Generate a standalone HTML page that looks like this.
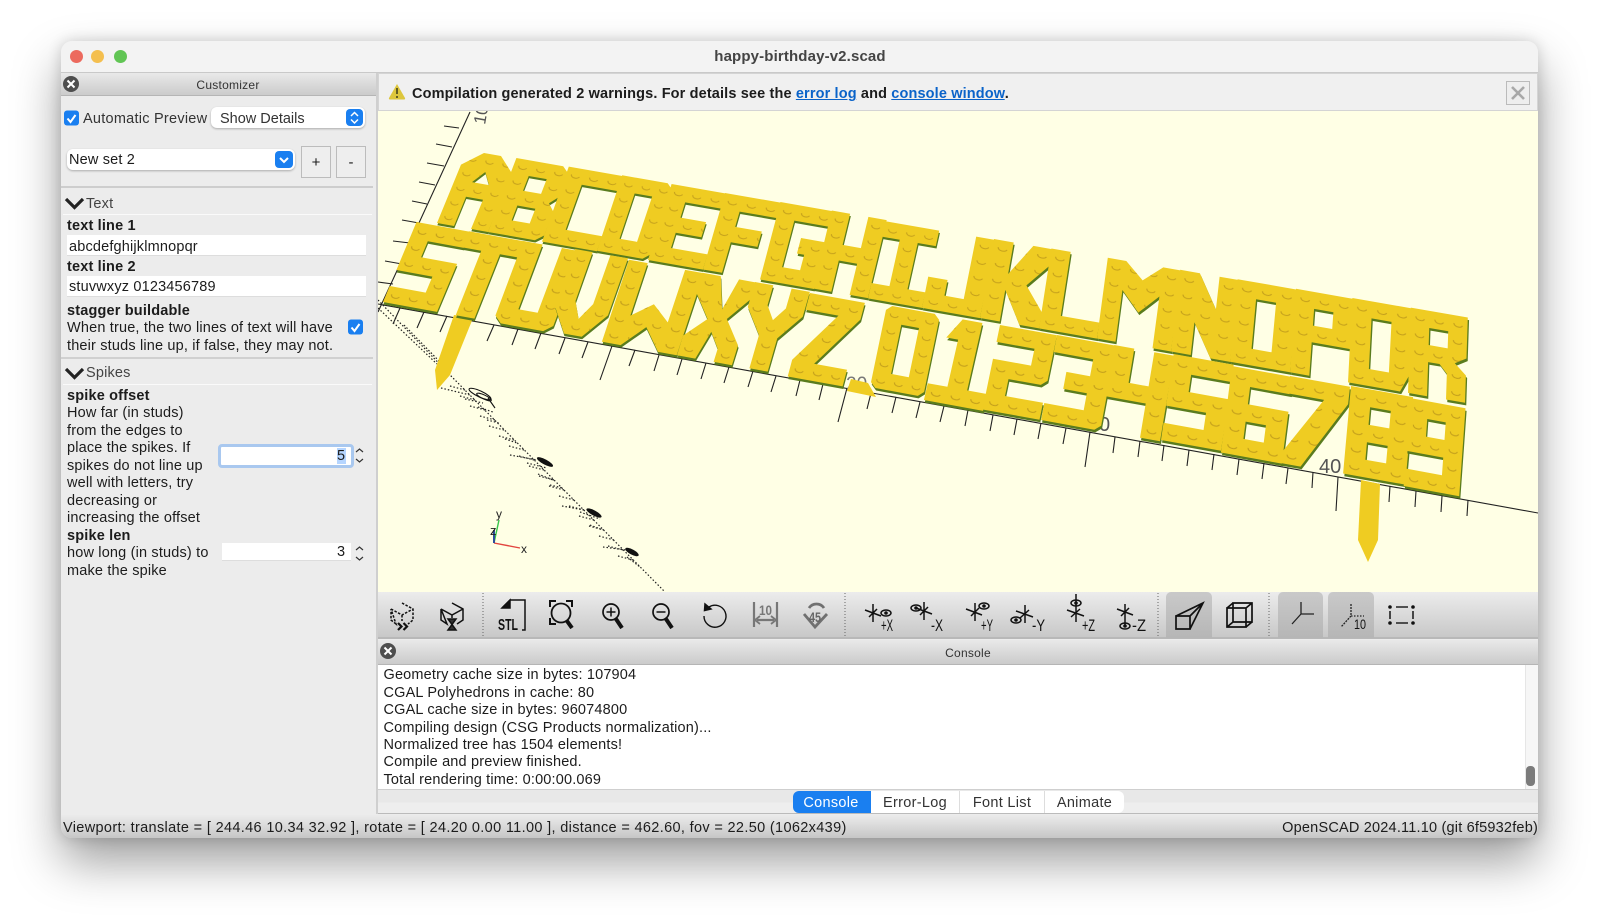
<!DOCTYPE html>
<html><head><meta charset="utf-8"><title>happy-birthday-v2.scad</title>
<style>
html,body{margin:0;padding:0;background:#fff;width:1600px;height:919px;overflow:hidden;font-family:"Liberation Sans",sans-serif;color:#1c1c1c}
.a{position:absolute}
.t{position:absolute;white-space:nowrap;line-height:18px;font-size:14.5px;letter-spacing:.17px;margin-top:1px}
.b{font-weight:bold}
.in{position:absolute;background:#fff;border-bottom:1px solid #ddd;box-sizing:border-box}
.hd{position:absolute;background:linear-gradient(#e9e9e9,#cbcbcb);border-bottom:1px solid #b5b5b5;box-sizing:border-box}
.sel{position:absolute;background:#fff;border-radius:6px;box-shadow:0 1px 2px rgba(0,0,0,.28)}
.btn{position:absolute;background:#eee;border:1px solid #bcbcbc;box-sizing:border-box;text-align:center;font-size:15px;line-height:32px}
.tab{position:absolute;top:791px;height:22px;line-height:24px;text-align:center;font-size:14.5px;letter-spacing:.3px;background:#fff;box-sizing:border-box;border-right:1px solid #ddd}
a{color:#0a63c9;text-decoration:underline}
svg{position:absolute;left:0;top:0}
.e{fill:#5a7c1e;transform:translate(.07px,.14px)}
.y{fill:#efcc22}
.p{fill:url(#st)}
</style></head>
<body>
<div class="a" id="win" style="left:61px;top:41px;width:1477px;height:797px;border-radius:11px;background:#ececec;box-shadow:0 24px 48px rgba(0,0,0,.38),0 0 14px rgba(0,0,0,.16)"></div>
<div class="a" style="left:61px;top:41px;width:1477px;height:32px;background:#f3f3f3;border-radius:11px 11px 0 0;border-bottom:1px solid #c9c9c9;box-sizing:border-box"></div>
<div class="a" style="left:70px;top:50px;width:13px;height:13px;border-radius:50%;background:#ec6a5e"></div>
<div class="a" style="left:91px;top:50px;width:13px;height:13px;border-radius:50%;background:#f4bf4f"></div>
<div class="a" style="left:114px;top:50px;width:13px;height:13px;border-radius:50%;background:#61c554"></div>
<div class="t b" style="left:600px;width:400px;text-align:center;top:47px;color:#444;font-size:15px;letter-spacing:.14px">happy-birthday-v2.scad</div>

<!-- customizer -->
<div class="hd" style="left:61px;top:73px;width:315px;height:23px"></div>
<div class="t" style="left:61px;width:334px;text-align:center;top:75px;font-size:12px;color:#333;letter-spacing:.25px">Customizer</div>
<div class="a" style="left:376px;top:73px;width:2px;height:741px;background:#cfcfcf"></div>
<div class="t" style="left:83px;top:109px;letter-spacing:.25px;color:#333">Automatic Preview</div>
<div class="sel" style="left:211px;top:107px;width:154px;height:21px"></div>
<div class="t" style="left:220px;top:109px;color:#333;letter-spacing:0">Show Details</div>
<div class="sel" style="left:67px;top:149px;width:228px;height:21px"></div>
<div class="t" style="left:69px;top:150px">New set 2</div>
<div class="btn" style="left:301px;top:146px;width:30px;height:32px">+</div>
<div class="btn" style="left:336px;top:146px;width:30px;height:32px">-</div>
<div class="a" style="left:61px;top:186px;width:312px;height:2px;background:#cdcdcd"></div>
<div class="a" style="left:63px;top:214px;width:309px;height:1px;background:#fafafa"></div>
<div class="t" style="left:86px;top:194px;color:#444">Text</div>
<div class="t b" style="left:67px;top:216px">text line 1</div>
<div class="in" style="left:67px;top:235px;width:299px;height:21px"></div>
<div class="t" style="left:69px;top:237px">abcdefghijklmnopqr</div>
<div class="t b" style="left:67px;top:257px">text line 2</div>
<div class="in" style="left:67px;top:276px;width:299px;height:21px"></div>
<div class="t" style="left:69px;top:277px">stuvwxyz 0123456789</div>
<div class="t b" style="left:67px;top:301px">stagger buildable</div>
<div class="t" style="left:67px;top:318px">When true, the two lines of text will have</div>
<div class="t" style="left:67px;top:336px">their studs line up, if false, they may not.</div>
<div class="a" style="left:61px;top:357px;width:312px;height:2px;background:#d0d0d0"></div>
<div class="a" style="left:63px;top:384px;width:309px;height:1px;background:#fafafa"></div>
<div class="t" style="left:86px;top:363px;color:#444">Spikes</div>
<div class="t b" style="left:67px;top:386px">spike offset</div>
<div class="t" style="left:67px;top:403px">How far (in studs)</div>
<div class="t" style="left:67px;top:421px">from the edges to</div>
<div class="t" style="left:67px;top:438px">place the spikes. If</div>
<div class="t" style="left:67px;top:456px">spikes do not line up</div>
<div class="t" style="left:67px;top:473px">well with letters, try</div>
<div class="t" style="left:67px;top:491px">decreasing or</div>
<div class="t" style="left:67px;top:508px">increasing the offset</div>
<div class="t b" style="left:67px;top:526px">spike len</div>
<div class="t" style="left:67px;top:543px">how long (in studs) to</div>
<div class="t" style="left:67px;top:561px">make the spike</div>
<div class="a" style="left:218px;top:444px;width:136px;height:24px;background:#fff;border:3px solid #a9c8ef;border-radius:4px;box-sizing:border-box"></div>
<div class="a" style="left:337px;top:448px;width:9px;height:16px;background:#b5d5ff"></div>
<div class="t" style="left:337px;top:446px">5</div>
<div class="in" style="left:222px;top:543px;width:129px;height:18px"></div>
<div class="t" style="left:337px;top:542px">3</div>

<!-- viewport -->
<div class="a" style="left:378px;top:73px;width:1160px;height:38px;background:#f0f0f0;border:1px solid #d4d4d4;box-sizing:border-box"></div>
<div class="t b" style="left:412px;top:84px;letter-spacing:.14px">Compilation generated 2 warnings. For details see the <a>error log</a> and <a>console window</a>.</div>
<div class="a" style="left:1506px;top:81px;width:24px;height:24px;border:1px solid #bbb;background:#eee;box-sizing:border-box"></div>
<div class="a" style="left:378px;top:111px;width:1160px;height:481px;background:#ffffe5"></div>

<svg width="1600" height="919" viewBox="0 0 1600 919" xmlns="http://www.w3.org/2000/svg">
<defs>
<clipPath id="vp"><rect x="378" y="111" width="1160" height="481"/></clipPath>
<pattern id="st" patternUnits="userSpaceOnUse" width="1" height="1">
<path d="M.28 .46C.3 .68 .64 .72 .74 .54" fill="none" stroke="#c4a01c" stroke-width=".06"/>
</pattern>
</defs>
<g clip-path="url(#vp)">
<!-- axes -->
<g fill="none" stroke="#222" stroke-width="1.1">
<path d="M378 304L1538 513"/>
<path d="M378 312L470 112"/>
<path d="M444 126L459 128M436 144L452 147M427 163L444 166M419 182L435 185M412 201L427 204M402 220L419 223M393 241L410 243M385 261L402 264M378 282L393 284"/>
<path d="M400 308l-7 16M424 312l-7 16M447 316l-7 16M471 321l-7 16M494 325l-7 16M518 329l-6 16M541 333l-6 16M565 338l-6 16M588 342l-6 16M612 346l-12 34M635 350l-6 16M659 355l-5 16M682 359l-5 16M706 363l-5 16M729 367l-5 16M753 371l-5 16M776 376l-5 16M800 380l-4 16M823 384l-4 16M847 388l-9 34M871 393l-4 16M896 397l-4 16M920 402l-4 16M944 406l-4 16M968 410l-3 16M993 415l-3 16M1017 419l-3 16M1041 423l-3 16M1066 428l-3 16M1090 432l-5 35M1115 437l-2 16M1140 441l-2 16M1164 445l-2 16M1189 450l-2 16M1214 454l-2 16M1239 459l-2 16M1264 463l-2 16M1288 468l-2 16M1313 472l-1 16M1338 477l-2 34M1364 481l-1 16M1390 486l-1 16M1416 491l-1 16M1442 496l-1 16M1468 500l-1 16"/>
</g>
<g font-family="Liberation Sans" fill="#555" font-size="20">
<text transform="translate(485,125) rotate(-80)" font-size="17">10</text>
<text x="846" y="390" font-size="19" fill="#777">20</text>
<text x="1099" y="431">0</text>
<text x="1319" y="473">40</text>
</g>
<!-- dotted -->
<g fill="none" stroke="#222" stroke-width="1.2" stroke-dasharray="1.5 2">
<path d="M378 300L452 377L665 592M378 308L437 364M404 325L440 362"/>
<path d="M441 388L470 395M465 399l18 4M478 407l15 5M487 420l12 3M505 439l12 4M510 455l27 5M527 463l20 5M538 474l15 6M550 485l13 3M562 506l22 4M580 512l20 7M590 525l13 5M603 547l23 3M627 557l13 10"/>
<path d="M450 386l15 4M460 396l15 4M470 406l15 4M480 416l15 4M489 426l15 4M499 436l15 4M509 446l15 4M519 456l15 4M529 466l15 4M539 476l15 4M549 486l15 4M559 496l15 4M569 506l15 4M579 516l15 4M589 526l15 4M599 536l15 4M608 546l15 4M618 556l15 4"/>
</g>
<g stroke="#111" fill="none" stroke-width="1.1">
<ellipse cx="480" cy="394" rx="12" ry="3" transform="rotate(25 480 394)"/>
<ellipse cx="484" cy="397" rx="8" ry="2" transform="rotate(25 484 397)"/>
<path d="M488 398L495 408"/>
</g>
<g fill="#111">
<ellipse cx="545" cy="462" rx="9" ry="2.6" transform="rotate(28 545 462)"/>
<ellipse cx="594" cy="513" rx="8.5" ry="2.6" transform="rotate(28 594 513)"/>
<ellipse cx="632" cy="552" rx="7.5" ry="2.6" transform="rotate(28 632 552)"/>
</g>
<!-- gizmo -->
<path d="M494 543L520 548" stroke="#e2453f" stroke-width="1.4"/>
<path d="M494 543L499 520" stroke="#36c64a" stroke-width="1.4"/>
<path d="M494 543V530" stroke="#2c4d9c" stroke-width="2"/>
<g font-family="Liberation Sans" font-size="12" fill="#222"><text x="521" y="553">x</text><text x="496" y="518">y</text><text x="490" y="535" font-size="13">z</text></g>
<!-- spikes -->
<path d="M454 315L473 318L450 375L437 390L435 370Z" fill="#efcc22"/>
<path d="M1361 480L1380 484L1378 540L1368 562L1358 540Z" fill="#efcc22"/>
<path d="M847 391L851 379L868 383L876 397Z" fill="#efcc22"/>

<!-- TOP ROW -->
<g fill-rule="evenodd">
<g transform="matrix(17 2.98 -6 14.6 467 150)"><path class="e" d="M0 5V1L1 0H2L3 1V5H2V3H1V5ZM1 2L1.5 1.2L2 2Z"/><path class="y" d="M0 5V1L1 0H2L3 1V5H2V3H1V5ZM1 2L1.5 1.2L2 2Z"/><path class="p" d="M0 5V1L1 0H2L3 1V5H2V3H1V5ZM1 2L1.5 1.2L2 2Z"/></g>
<g transform="matrix(18 3.15 -5.68 14.8 516.4 158)"><path class="e" d="M0 0H2.6L3 .4V2L2.6 2.5L3 3V4.6L2.6 5H0ZM1 1V2H2V1ZM1 3V4H2V3Z"/><path class="y" d="M0 0H2.6L3 .4V2L2.6 2.5L3 3V4.6L2.6 5H0ZM1 1V2H2V1ZM1 3V4H2V3Z"/><path class="p" d="M0 0H2.6L3 .4V2L2.6 2.5L3 3V4.6L2.6 5H0ZM1 1V2H2V1ZM1 3V4H2V3Z"/></g>
<g transform="matrix(18.3 3.2 -5.36 15 568.8 166.6)"><path class="e" d="M0 0H3V1H1V4H3V5H0Z"/><path class="y" d="M0 0H3V1H1V4H3V5H0Z"/><path class="p" d="M0 0H3V1H1V4H3V5H0Z"/></g>
<g transform="matrix(17.5 3.06 -5.04 15.1 622.2 175.3)"><path class="e" d="M0 0H2.6L3 .4V4.6L2.6 5H0ZM1 1V4H2V1Z"/><path class="y" d="M0 0H2.6L3 .4V4.6L2.6 5H0ZM1 1V4H2V1Z"/><path class="p" d="M0 0H2.6L3 .4V4.6L2.6 5H0ZM1 1V4H2V1Z"/></g>
<g transform="matrix(18.3 3.2 -4.72 15.2 671.6 184)"><path class="e" d="M0 0H3V1H1V2H2.4V3H1V4H3V5H0Z"/><path class="y" d="M0 0H3V1H1V2H2.4V3H1V4H3V5H0Z"/><path class="p" d="M0 0H3V1H1V2H2.4V3H1V4H3V5H0Z"/></g>
<g transform="matrix(19 3.3 -4.4 15.3 725 193)"><path class="e" d="M0 0H3V1H1V2H2.4V3H1V5H0Z"/><path class="y" d="M0 0H3V1H1V2H2.4V3H1V5H0Z"/><path class="p" d="M0 0H3V1H1V2H2.4V3H1V5H0Z"/></g>
<g transform="matrix(18 3.15 -4.08 15.5 780.4 202)"><path class="e" d="M0 0H3V1H1V4H2V3H1.6V2H3V5H0Z"/><path class="y" d="M0 0H3V1H1V4H2V3H1.6V2H3V5H0Z"/><path class="p" d="M0 0H3V1H1V4H2V3H1.6V2H3V5H0Z"/></g>
<g transform="matrix(18.3 3.2 -3.76 15.6 831.8 210.5)"><path class="e" d="M0 0H1V2H2V0H3V5H2V3H1V5H0Z"/><path class="y" d="M0 0H1V2H2V0H3V5H2V3H1V5H0Z"/><path class="p" d="M0 0H1V2H2V0H3V5H2V3H1V5H0Z"/></g>
<g transform="matrix(18 3.15 -3.44 15.44 885.2 221.2)"><path class="e" d="M0 0H3V1H2V4H3V5H0V4H1V1H0Z"/><path class="y" d="M0 0H3V1H2V4H3V5H0V4H1V1H0Z"/><path class="p" d="M0 0H3V1H2V4H3V5H0V4H1V1H0Z"/></g>
<g transform="matrix(19.3 3.4 -3.12 15.62 937.6 229.8)"><path class="e" d="M2 0H3V5H0V3H1V4H2Z"/><path class="y" d="M2 0H3V5H0V3H1V4H2Z"/><path class="p" d="M2 0H3V5H0V3H1V4H2Z"/></g>
<g transform="matrix(19.7 3.45 -2.8 15.8 994 239)"><path class="e" d="M0 0H1V2L2 0H3V1L2 2.5L3 4V5H2L1 3V5H0Z"/><path class="y" d="M0 0H1V2L2 0H3V1L2 2.5L3 4V5H2L1 3V5H0Z"/><path class="p" d="M0 0H1V2L2 0H3V1L2 2.5L3 4V5H2L1 3V5H0Z"/></g>
<g transform="matrix(19.3 3.4 -2.48 15.98 1051.4 248.5)"><path class="e" d="M0 0H1V4H3V5H0Z"/><path class="y" d="M0 0H1V4H3V5H0Z"/><path class="p" d="M0 0H1V4H3V5H0Z"/></g>
<g transform="matrix(18.5 3.24 -2.16 16.16 1107.8 257.7)"><path class="e" d="M0 0H1L2 1L3 0H4V5H3V1.8L2 3L1 1.8V5H0Z"/><path class="y" d="M0 0H1L2 1L3 0H4V5H3V1.8L2 3L1 1.8V5H0Z"/><path class="p" d="M0 0H1L2 1L3 0H4V5H3V1.8L2 3L1 1.8V5H0Z"/></g>
<g transform="matrix(19.7 3.45 -1.84 16.34 1180.2 269.8)"><path class="e" d="M0 0H1L2 2V0H3V5H2L1 3V5H0Z"/><path class="y" d="M0 0H1L2 2V0H3V5H2L1 3V5H0Z"/><path class="p" d="M0 0H1L2 2V0H3V5H2L1 3V5H0Z"/></g>
<g transform="matrix(20 3.5 -1.52 16.52 1237.6 279.2)"><path class="e" d="M0 0H3V5H0ZM1 1V4H2V1Z"/><path class="y" d="M0 0H3V5H0ZM1 1V4H2V1Z"/><path class="p" d="M0 0H3V5H0ZM1 1V4H2V1Z"/></g>
<g transform="matrix(19.3 3.4 -1.2 16.7 1296 288.8)"><path class="e" d="M0 0H3V3H1V5H0ZM1 1V2H2V1Z"/><path class="y" d="M0 0H3V3H1V5H0ZM1 1V2H2V1Z"/><path class="p" d="M0 0H3V3H1V5H0ZM1 1V2H2V1Z"/></g>
<g transform="matrix(20 3.5 -.88 16.88 1352.4 298)"><path class="e" d="M0 0H3V4L2.6 5H0ZM1 1V4H2V1Z"/><path class="y" d="M0 0H3V4L2.6 5H0ZM1 1V4H2V1Z"/><path class="p" d="M0 0H3V4L2.6 5H0ZM1 1V4H2V1Z"/></g>
<g transform="matrix(19 3.3 -.56 17.06 1410.8 307.6)"><path class="e" d="M0 0H3V2.4L2.4 2.8L3 3.4V5H2V3.5L1.6 3H1V5H0ZM1 1V2H2V1Z"/><path class="y" d="M0 0H3V2.4L2.4 2.8L3 3.4V5H2V3.5L1.6 3H1V5H0ZM1 1V2H2V1Z"/><path class="p" d="M0 0H3V2.4L2.4 2.8L3 3.4V5H2V3.5L1.6 3H1V5H0ZM1 1V2H2V1Z"/></g>

<!-- BOTTOM ROW -->
<g transform="matrix(18 3.3 -6.7 16 416.5 222)"><path class="e" d="M0 0H3V1H1V2H3V5H0V4H2V3H0Z"/><path class="y" d="M0 0H3V1H1V2H3V5H0V4H2V3H0Z"/><path class="p" d="M0 0H3V1H1V2H3V5H0V4H2V3H0Z"/></g>
<g transform="matrix(18.7 3.4 -6.38 16.1 468.9 231.3)"><path class="e" d="M0 0H3V1H2V5H1V1H0Z"/><path class="y" d="M0 0H3V1H2V5H1V1H0Z"/><path class="p" d="M0 0H3V1H2V5H1V1H0Z"/></g>
<g transform="matrix(19.3 3.5 -6.06 16.2 523.3 241)"><path class="e" d="M0 0H1V4H2V0H3V4.6L2.6 5H.4L0 4.6Z"/><path class="y" d="M0 0H1V4H2V0H3V4.6L2.6 5H.4L0 4.6Z"/><path class="p" d="M0 0H1V4H2V0H3V4.6L2.6 5H.4L0 4.6Z"/></g>
<g transform="matrix(17.7 3.1 -5.74 16.3 575 249)"><path class="e" d="M0 0H1V3L1.5 4L2 3V0H3V3.5L2 5H1L0 3.5Z"/><path class="y" d="M0 0H1V3L1.5 4L2 3V0H3V3.5L2 5H1L0 3.5Z"/><path class="p" d="M0 0H1V3L1.5 4L2 3V0H3V3.5L2 5H1L0 3.5Z"/></g>
<g transform="matrix(18.7 3.4 -5.42 16.4 629 259.7)"><path class="e" d="M0 0H1V3.2L2 2.3L3 3.2V0H4V5H3L2 3.7L1 5H0Z"/><path class="y" d="M0 0H1V3.2L2 2.3L3 3.2V0H4V5H3L2 3.7L1 5H0Z"/><path class="p" d="M0 0H1V3.2L2 2.3L3 3.2V0H4V5H3L2 3.7L1 5H0Z"/></g>
<g transform="matrix(18.3 3.3 -5.1 16.5 702.5 272.8)"><path class="e" d="M0 0H1L1.6 1.9L2 0H3V.9L2 2.4L3 3.8V5H2V4.2L1.4 3.3L1 5H0V3.8L1 2.6L0 1.2Z"/><path class="y" d="M0 0H1L1.6 1.9L2 0H3V.9L2 2.4L3 3.8V5H2V4.2L1.4 3.3L1 5H0V3.8L1 2.6L0 1.2Z"/><path class="p" d="M0 0H1L1.6 1.9L2 0H3V.9L2 2.4L3 3.8V5H2V4.2L1.4 3.3L1 5H0V3.8L1 2.6L0 1.2Z"/></g>
<g transform="matrix(18.3 3.3 -4.78 16.6 755 282)"><path class="e" d="M0 0H1V1.2L1.5 2L2 1.2V0H3V1.5L2 3V5H1V3L0 1.5Z"/><path class="y" d="M0 0H1V1.2L1.5 2L2 1.2V0H3V1.5L2 3V5H1V3L0 1.5Z"/><path class="p" d="M0 0H1V1.2L1.5 2L2 1.2V0H3V1.5L2 3V5H1V3L0 1.5Z"/></g>
<g transform="matrix(18.3 3.3 -4.46 16.7 810 293)"><path class="e" d="M0 0H3V1L1.2 4H3V5H0V4L1.8 1H0Z"/><path class="y" d="M0 0H3V1L1.2 4H3V5H0V4L1.8 1H0Z"/><path class="p" d="M0 0H3V1L1.2 4H3V5H0V4L1.8 1H0Z"/></g>
<g transform="matrix(17.7 3.3 -3.4 16.4 887 305)"><path class="e" d="M.3 0H2.7L3 .3V4.7L2.7 5H.3L0 4.7V.3ZM1 1V4H2V1Z"/><path class="y" d="M.3 0H2.7L3 .3V4.7L2.7 5H.3L0 4.7V.3ZM1 1V4H2V1Z"/><path class="p" d="M.3 0H2.7L3 .3V4.7L2.7 5H.3L0 4.7V.3ZM1 1V4H2V1Z"/></g>
<g transform="matrix(19.7 3.6 -3.82 16.85 943 315.8)"><path class="e" d="M1 0H2V4H3V5H0V4H1V1.2L.4 1.2Z"/><path class="y" d="M1 0H2V4H3V5H0V4H1V1.2L.4 1.2Z"/><path class="p" d="M1 0H2V4H3V5H0V4H1V1.2L.4 1.2Z"/></g>
<g transform="matrix(19 3.4 -3.5 16.9 1000 325)"><path class="e" d="M0 0H3V2.7L2.7 3H1V4H3V5H0V2H2V1H0Z"/><path class="y" d="M0 0H3V2.7L2.7 3H1V4H3V5H0V2H2V1H0Z"/><path class="p" d="M0 0H3V2.7L2.7 3H1V4H3V5H0V2H2V1H0Z"/></g>
<g transform="matrix(19.7 3.6 -3.18 17 1057 335)"><path class="e" d="M0 0H3V4.7L2.7 5H0V4H2V3H.8V2H2V1H0Z"/><path class="y" d="M0 0H3V4.7L2.7 5H0V4H2V3H.8V2H2V1H0Z"/><path class="p" d="M0 0H3V4.7L2.7 5H0V4H2V3H.8V2H2V1H0Z"/></g>
<g transform="matrix(20 3.6 -2.86 17.1 1114.3 345)"><path class="e" d="M0 0H1V2H2V0H3V5H2V3H0Z"/><path class="y" d="M0 0H1V2H2V0H3V5H2V3H0Z"/><path class="p" d="M0 0H1V2H2V0H3V5H2V3H0Z"/></g>
<g transform="matrix(20 3.6 -2.54 17.2 1173.7 354)"><path class="e" d="M0 0H3V1H1V2H3V5H0V4H2V3H0Z"/><path class="y" d="M0 0H3V1H1V2H3V5H0V4H2V3H0Z"/><path class="p" d="M0 0H3V1H1V2H3V5H0V4H2V3H0Z"/></g>
<g transform="matrix(20.3 3.7 -2.22 17.3 1232 366)"><path class="e" d="M0 0H3V1H1V2H3V5H0ZM1 3V4H2V3Z"/><path class="y" d="M0 0H3V1H1V2H3V5H0ZM1 3V4H2V3Z"/><path class="p" d="M0 0H3V1H1V2H3V5H0ZM1 3V4H2V3Z"/></g>
<g transform="matrix(20 3.6 -1.9 17.4 1290 376)"><path class="e" d="M0 0H3V1L1 5H0V4.4L1.8 1H0Z"/><path class="y" d="M0 0H3V1L1 5H0V4.4L1.8 1H0Z"/><path class="p" d="M0 0H3V1L1 5H0V4.4L1.8 1H0Z"/></g>
<g transform="matrix(20.7 3.7 -1.58 17.5 1351 386)"><path class="e" d="M0 0H3V5H0ZM1 1V2H2V1ZM1 3V4H2V3Z"/><path class="y" d="M0 0H3V5H0ZM1 1V2H2V1ZM1 3V4H2V3Z"/><path class="p" d="M0 0H3V5H0ZM1 1V2H2V1ZM1 3V4H2V3Z"/></g>
<g transform="matrix(18.5 3.4 -1.26 17.6 1410 398)"><path class="e" d="M0 0H3V5H0V4H2V3H0ZM1 1V2H2V1Z"/><path class="y" d="M0 0H3V5H0V4H2V3H0ZM1 1V2H2V1Z"/><path class="p" d="M0 0H3V5H0V4H2V3H0ZM1 1V2H2V1Z"/></g>
</g>
</g>

<!-- customizer icons -->
<circle cx="71" cy="84" r="8" fill="#4e4e4e"/><path d="M67.5 80.5l7 7m0-7l-7 7" stroke="#fff" stroke-width="2"/>
<rect x="64" y="110.5" width="15" height="15" rx="3" fill="#1a7ff0"/><path d="M67.5 118.5l3 3.5 5-7" fill="none" stroke="#fff" stroke-width="2"/>
<rect x="346" y="109" width="17" height="17" rx="4" fill="#1a7ff0"/><path d="M351 116l3.5-3.5 3.5 3.5M351 119.5l3.5 3.5 3.5-3.5" fill="none" stroke="#fff" stroke-width="1.5"/>
<rect x="275" y="151" width="18" height="17" rx="4" fill="#1a7ff0"/><path d="M280 158l4 4 4-4" fill="none" stroke="#fff" stroke-width="2"/>
<rect x="348" y="319.5" width="15" height="15" rx="3" fill="#1a7ff0"/><path d="M351.5 327.5l3 3.5 5-7" fill="none" stroke="#fff" stroke-width="2"/>
<path d="M66 199l8.500 8.500L83 199" fill="none" stroke="#222" stroke-width="3.2"/>
<path d="M66 369l8.500 8.500L83 369" fill="none" stroke="#222" stroke-width="3.2"/>
<path d="M356 452l3.500-3 3.500 3M356 459l3.500 3 3.500-3M356 550l3.500-3 3.500 3M356 557l3.500 3 3.500-3" fill="none" stroke="#333" stroke-width="1.2"/>

<!-- warning + close -->
<path d="M397 84L405 98Q405.5 99.5 404 99.5H390Q388.5 99.5 389 98Z" fill="#ddc63c"/>
<path d="M397 88v6M397 96v2" stroke="#3b3a1a" stroke-width="1.5"/>
<path d="M1512 87l12 12m0-12l-12 12" stroke="#a8a8a8" stroke-width="2.6"/>
</svg>

<!-- toolbar -->
<div class="a" style="left:378px;top:592px;width:1160px;height:47px;background:linear-gradient(#ececec,#c8c8c8);border-bottom:2px solid #b8b8b8;box-sizing:border-box"></div>
<div class="a" style="left:1166px;top:592px;width:46px;height:46px;background:linear-gradient(#c9c9c9,#b6b6b6);border-radius:5px 5px 0 0"></div>
<div class="a" style="left:1278px;top:592px;width:45px;height:46px;background:linear-gradient(#c9c9c9,#b6b6b6);border-radius:5px 5px 0 0"></div>
<div class="a" style="left:1328px;top:592px;width:46px;height:46px;background:linear-gradient(#c9c9c9,#b6b6b6);border-radius:5px 5px 0 0"></div>

<svg width="1600" height="919" viewBox="0 0 1600 919" xmlns="http://www.w3.org/2000/svg" font-family="Liberation Sans">
<g fill="none" stroke="#666" stroke-width="1" stroke-dasharray="1 2"><path d="M483 593V637M845 593V637M1158 593V637M1269 593V637"/></g>
<g fill="none" stroke="#111" stroke-width="1.5">
<!-- preview -->
<g transform="translate(402,616)" stroke-dasharray="2.500 1.500"><path d="M0-13L11-7V4L6 8M-6 8L-11 4V-7ZM-11-7L0-1L11-7M0-1V5"/></g>
<path d="M398 623l3.500 3.500-3.500 3.500M403.500 623l3.500 3.500-3.500 3.500" stroke-width="2.2"/>
<!-- render -->
<g transform="translate(452,616)"><path d="M0-13L11-7V4L5 8M-5 8L-11 4V-7ZM-11-7L0-1L11-7M0-1V2"/><path d="M-4 3H4L-4 14H4Z" fill="#333"/></g>
<!-- stl -->
<path d="M502 608L510 600H525V630H522" />
<path d="M502 608H510V600Z" fill="#111"/>
<!-- view all -->
<path d="M550 607V601H556M566 601H572V607M550 618V624H556" stroke-width="2"/>
<circle cx="561" cy="613" r="9.500" stroke-width="1.8"/>
<path d="M567 621L572 628" stroke-width="4"/>
<!-- zoom in -->
<circle cx="611" cy="612" r="8" stroke-width="1.7"/><path d="M606.500 612H615.500M611 607.500V616.500" stroke-width="1.5"/><path d="M616 619L622 628" stroke-width="4"/>
<!-- zoom out -->
<circle cx="661" cy="612" r="8" stroke-width="1.7"/><path d="M656.500 612H665.500" stroke-width="1.5"/><path d="M666 619L672 628" stroke-width="4"/>
<!-- reset -->
<path d="M709 607A11 11 0 1 1 704 616" stroke-width="1.4"/><path d="M705 604L704.500 610.500L711 609Z" fill="#111"/>
</g>
<text x="498" y="630" font-size="16" font-weight="bold" fill="#111" textLength="20" lengthAdjust="spacingAndGlyphs">STL</text>
<!-- dist -->
<g fill="none" stroke="#777" stroke-width="2.2"><path d="M754 602V627M777 602V627M757 620H774"/><path d="M760 616L755 620L760 624M771 616L776 620L771 624" stroke-width="1.8"/></g>
<text x="759" y="615" font-size="14" font-weight="bold" fill="#777" textLength="13" lengthAdjust="spacingAndGlyphs">10</text>
<!-- 45 -->
<g fill="none" stroke="#707070" stroke-width="2.8"><path d="M804 614L815 627L827 614M809 608A9 9 0 0 1 824 608"/></g>
<text x="809" y="622" font-size="14" font-weight="bold" fill="#666" textLength="12" lengthAdjust="spacingAndGlyphs">45</text>
<!-- view axes -->
<g fill="none" stroke="#111" stroke-width="1.5">
<path d="M873 604V622M865 610L881 616M869 617L877 609"/>
<path d="M924 602V620M916 608L932 614M920 615L928 607"/>
<path d="M975 603V621M966 609L982 615M971 616L979 608"/>
<path d="M1025 605V623M1016 611L1033 617M1020 618L1029 610"/>
<path d="M1076 594V622M1067 610L1084 616M1071 617L1080 609"/>
<path d="M1125 604V626M1117 609L1133 615M1121 616L1129 608"/>
<ellipse cx="886" cy="613" rx="5" ry="3"/><ellipse cx="916" cy="608" rx="5" ry="3"/><ellipse cx="984" cy="606" rx="5" ry="3"/><ellipse cx="1016" cy="620" rx="5" ry="3"/><ellipse cx="1076" cy="603" rx="5" ry="3"/><ellipse cx="1125" cy="626" rx="5" ry="3"/>
</g>
<g fill="#111"><circle cx="886" cy="613" r="1.8"/><circle cx="916" cy="608" r="1.8"/><circle cx="984" cy="606" r="1.8"/><circle cx="1016" cy="620" r="1.8"/><circle cx="1076" cy="603" r="1.8"/><circle cx="1125" cy="626" r="1.8"/></g>
<g font-size="17" fill="#111">
<text x="881" y="631" textLength="12" lengthAdjust="spacingAndGlyphs">+X</text>
<text x="931" y="631" textLength="12" lengthAdjust="spacingAndGlyphs">-X</text>
<text x="981" y="631" textLength="12" lengthAdjust="spacingAndGlyphs">+Y</text>
<text x="1032" y="631" textLength="13" lengthAdjust="spacingAndGlyphs">-Y</text>
<text x="1082" y="631" textLength="13" lengthAdjust="spacingAndGlyphs">+Z</text>
<text x="1132" y="631" textLength="14" lengthAdjust="spacingAndGlyphs">-Z</text>
</g>
<!-- projection -->
<g fill="none" stroke="#111" stroke-width="1.7">
<path d="M1176 616H1190V629H1176ZM1176 616L1203 603L1190 629M1190 616L1203 603"/>
<path d="M1227 608H1246V627H1227ZM1233 603H1252V622H1233ZM1227 608L1233 603M1246 608L1252 603M1246 627L1252 622M1227 627L1233 622"/>
</g>
<!-- axes toggle -->
<g fill="none" stroke="#222" stroke-width="1.3">
<path d="M1301 602V614H1314M1301 614L1292 624"/>
<path d="M1351 604V616M1351 616L1341 627" stroke-dasharray="2 1"/><path d="M1351 616H1364" stroke-dasharray="1.5 1.5"/>
<path d="M1396 607H1408M1413 611V619M1396 623H1408M1390 611V619" stroke-width="1.6"/>
</g>
<g fill="#111"><circle cx="1390" cy="607" r="1.8"/><circle cx="1413" cy="607" r="1.8"/><circle cx="1390" cy="623" r="1.8"/><circle cx="1413" cy="623" r="1.8"/></g>
<text x="1354" y="629" font-size="14" fill="#111" textLength="12" lengthAdjust="spacingAndGlyphs">10</text>
</svg>

<!-- console -->
<div class="hd" style="left:378px;top:640px;width:1160px;height:25px"></div>
<svg width="1600" height="919" viewBox="0 0 1600 919" xmlns="http://www.w3.org/2000/svg"><circle cx="388" cy="651" r="8" fill="#4e4e4e"/><path d="M384.500 647.500l7 7m0-7l-7 7" stroke="#fff" stroke-width="2"/></svg>
<div class="t" style="left:378px;width:1180px;text-align:center;top:643px;font-size:12px;color:#333;letter-spacing:.25px">Console</div>
<div class="a" style="left:378px;top:665px;width:1160px;height:124px;background:#fff"></div>
<div class="a" style="left:1525px;top:665px;width:13px;height:124px;background:#f6f6f6;border-left:1px solid #e6e6e6;box-sizing:border-box"></div>
<div class="a" style="left:1526px;top:766px;width:9px;height:20px;border-radius:4px;background:#7b7b7b"></div>
<div class="t" style="left:383.5px;top:665px">Geometry cache size in bytes: 107904</div>
<div class="t" style="left:383.5px;top:683px">CGAL Polyhedrons in cache: 80</div>
<div class="t" style="left:383.5px;top:700px">CGAL cache size in bytes: 96074800</div>
<div class="t" style="left:383.5px;top:718px">Compiling design (CSG Products normalization)...</div>
<div class="t" style="left:383.5px;top:735px">Normalized tree has 1504 elements!</div>
<div class="t" style="left:383.5px;top:752px">Compile and preview finished.</div>
<div class="t" style="left:383.5px;top:770px">Total rendering time: 0:00:00.069</div>
<div class="a" style="left:378px;top:789px;width:1160px;height:25px;background:linear-gradient(#e8e8e8 0,#e8e8e8 55%,#eeeeee 55%);border-top:1px solid #cfcfcf;border-bottom:1px solid #bbb;box-sizing:border-box"></div>
<div class="tab" style="left:793px;width:78px;background:#1a7ff0;color:#fff;border-radius:6px 0 0 6px;border:none;text-indent:-2px">Console</div>
<div class="tab" style="left:871px;width:89px;color:#333">Error-Log</div>
<div class="tab" style="left:960px;width:85px;color:#333">Font List</div>
<div class="tab" style="left:1045px;width:79px;color:#333;border-radius:0 6px 6px 0;border:none">Animate</div>

<!-- status -->
<div class="a" style="left:61px;top:814px;width:1477px;height:24px;background:linear-gradient(#ededed,#c6c6c6);border-radius:0 0 11px 11px"></div>
<div class="t" style="left:63px;top:818px;letter-spacing:.34px">Viewport: translate = [ 244.46 10.34 32.92 ], rotate = [ 24.20 0.00 11.00 ], distance = 462.60, fov = 22.50 (1062x439)</div>
<div class="t" style="right:62px;top:818px;letter-spacing:.2px">OpenSCAD 2024.11.10 (git 6f5932feb)</div>
</body></html>
